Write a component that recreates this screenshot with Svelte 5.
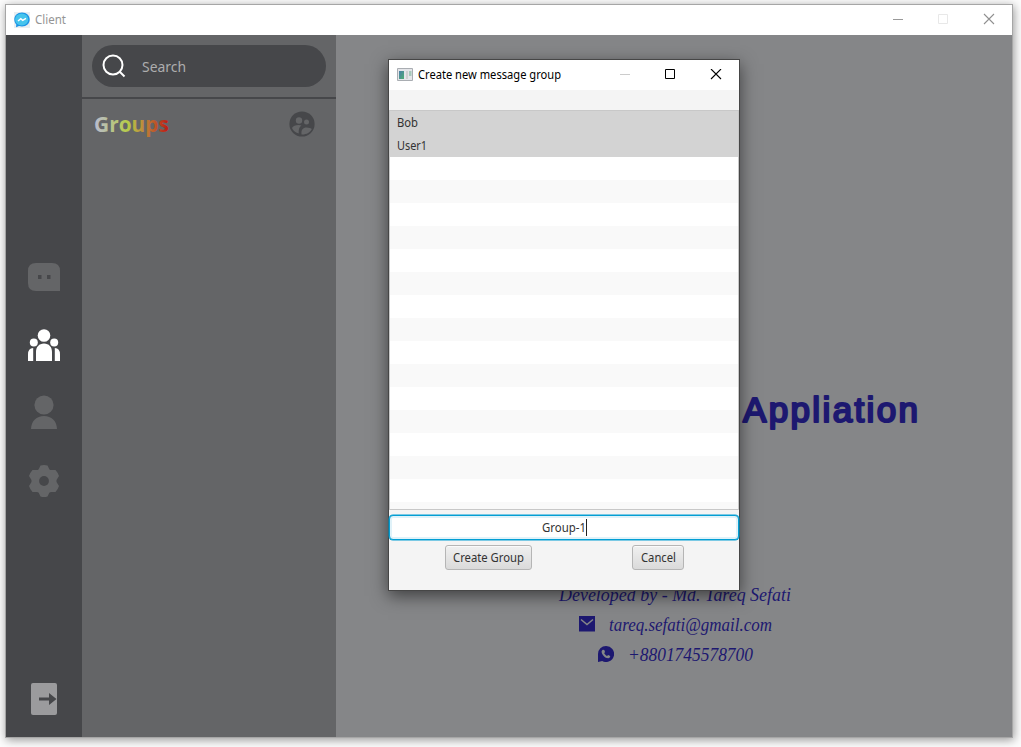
<script>
  const users = ['Bob', 'User1'];
  const emptyRows = Array.from({ length: 16 });
</script>

{#snippet label(text, width, size, cls = '', adjust = 'spacingAndGlyphs')}
  <svg class="label {cls}" width={width} height={Math.round(size * 1.5)} font-size={size}>
    <text x="0" y={Math.round(size * 1.1)} textLength={width} lengthAdjust={adjust}>{text}</text>
  </svg>
{/snippet}

<div class="desktop">
  <section class="window">
    <header class="titlebar">
      <svg class="logo" width="16" height="16" viewBox="0 0 16 16">
        <rect width="16" height="16" fill="#e9eef1" />
        <path d="M8 .5C3.400 .5 .300 3.500 .300 7.500c0 2 .8 3.700 2 4.900L2 15.300l3-1.200c1 .3 2 .4 3 .4 4.600 0 7.700-3 7.700-7S12.600.5 8 .5Z" fill="#1b94e6" />
        <ellipse cx="7.700" cy="7.500" rx="6.600" ry="5.900" fill="#45c4ec" />
        <path d="m4 9 2.800-2.300L8.700 8.300 12 6.300" fill="none" stroke="#fff" stroke-width="1.500" />
      </svg>
      {@render label('Client', 31, 12)}
      <svg class="controls" width="102" height="12" viewBox="0 0 102 12" fill="none">
        <path d="M0 6.500h10" stroke="#999" />
        <path d="M45.500 1.500h9v9h-9z" stroke="#e8e8e8" />
        <path d="m91 1 10 10m0-10L91 11" stroke="#909090" stroke-width="1.100" />
      </svg>
    </header>
    <div class="body">
      <nav class="rail">
        <svg width="32" height="28" viewBox="0 0 32 28"><path d="M8 0h16q8 0 8 8v20H8q-8 0-8-8V8q0-8 8-8Z" fill="#646567" /><path d="M10 12h3.500v4H10zm9 0h3.500v4H19z" fill="#46474a" /></svg>
        <svg class="people" width="32" height="32" viewBox="0 0 32 32" fill="#fff">
          <circle cx="16" cy="6.500" r="6.300" /><circle cx="5.800" cy="13.500" r="4" /><circle cx="26.200" cy="13.500" r="4" />
          <path d="M8 32v-9c0-5 3-8.500 8-8.500s8 3.500 8 8.500v9ZM0 32v-6.500Q0 19 5.200 19v13ZM32 32v-6.500Q32 19 26.800 19v13Z" />
        </svg>
        <svg class="person" width="26" height="34" viewBox="0 0 26 34" fill="#646567"><circle cx="13" cy="10" r="9.600" /><path d="M0 34C.3 26 5.500 21 13 21s12.700 5 13 13Z" /></svg>
        <svg class="gear" width="32" height="32" viewBox="0 0 32 32"><path d="M12.500.5q3.500-1 7 0l1.800 3.700q.7 1 2 .9l4.200-.2q2.500 2.800 3.500 6l-2.200 3.500q-.7 1.600 0 3.200l2.200 3.500q-1 3.200-3.500 6l-4.200-.2q-1.300 0-2 .9l-1.800 3.700q-3.500 1-7 0l-1.800-3.700q-.7-1-2-.9l-4.200.2q-2.500-2.800-3.500-6l2.200-3.500q.7-1.600 0-3.200L1 10.900q1-3.200 3.500-6l4.200.2q1.300 0 2-.9Z" fill="#646567" /><circle cx="16" cy="16" r="4.900" fill="#46474a" /></svg>
        <svg class="exit" width="26" height="32" viewBox="0 0 26 32"><rect width="26" height="32" rx="2" fill="#9b9b9d" /><path d="M8 14.500h10V10l7.500 6-7.500 6v-4.500H8z" fill="#46474a" /></svg>
      </nav>
      <aside class="panel">
        <div class="searcharea">
          <div class="search">
            <svg width="24" height="24" viewBox="0 0 24 24" fill="none" stroke="#fff" stroke-width="2"><circle cx="11" cy="11" r="9.500" /><path d="m17.500 17.500 5 5" /></svg>
            {@render label('Search', 44, 15)}
          </div>
        </div>
        <div class="heading">
          <svg class="groups" width="75" height="30">
            <defs><linearGradient id="rainbow"><stop stop-color="#babbd2" /><stop offset=".45" stop-color="#b6cc49" /><stop offset=".7" stop-color="#bd7d37" /><stop offset="1" stop-color="#bd1712" /></linearGradient></defs>
            <text x="0" y="21" textLength="75" lengthAdjust="spacingAndGlyphs" fill="url(#rainbow)">Groups</text>
          </svg>
          <svg width="26" height="26" viewBox="0 0 26 26"><circle cx="13" cy="13" r="12.600" fill="#46474a" /><g fill="#646567"><circle cx="10" cy="9.500" r="3.200" /><circle cx="17.500" cy="11" r="2.500" /><path d="M3 17c1-3 7-3.600 9.500-2.500-2.300 1.500-3 4-2.800 8C6 21.500 4 19.500 3 17ZM12.500 23.500c-.4-5 1.500-7 5-7 2.500 0 4.700.8 5.300 1.500-1.700 3.500-5.200 5.700-10.300 5.500Z" /></g></svg>
        </div>
      </aside>
      <main class="welcome">
        <div class="title">{@render label('Appliation', 175, 35, 'rounded', 'spacing')}</div>
        <div class="credits">
          <div>{@render label('Developed by - Md. Tareq Sefati', 232, 19, 'script')}</div>
          <div class="contact">
            <svg width="16" height="16" viewBox="0 0 16 16"><path fill="#1d1870" d="M0 0h16v15.500H0z" /><path d="m2 3.500 6 5 6-5" fill="none" stroke="#858688" stroke-width="1.500" /></svg>
            {@render label('tareq.sefati@gmail.com', 163, 19, 'script')}
          </div>
          <div class="contact">
            <svg width="16" height="16" viewBox="0 0 16 16"><path d="M8 0a8 8 0 1 1-3.800 15L0 16l0-8A8 8 0 0 1 8 0Z" fill="#1d1870" /><path d="M5 3.800 6.300 4 7 6l-.8 1.200c.7 1.200 1.500 2 2.800 2.700L10.200 9l2 1c.1 1.200-.7 2.200-2 2.300C7 12 3.800 8.800 3.600 5.700 3.700 4.700 4.200 4 5 3.800Z" fill="#858688" /></svg>
            {@render label('+8801745578700', 125, 19, 'script')}
          </div>
        </div>
      </main>
    </div>
  </section>

  <section class="dialog">
    <header class="dialogbar">
      <svg width="16" height="14" viewBox="0 0 16 14">
        <defs><linearGradient id="screen" x2="1" y2="1"><stop stop-color="#4b7eaa" /><stop offset="1" stop-color="#4eae72" /></linearGradient></defs>
        <path d="M.5.5h15v12H.5z" fill="#e4e5e9" stroke="#a9adb2" /><path d="M2 3h5v8H2z" fill="url(#screen)" /><path d="M9 3h2v8H9z" fill="#d0d0d0" /><path d="M12 3h2.500v5H12z" fill="#a7c9bb" />
      </svg>
      {@render label('Create new message group', 143, 12)}
      <svg class="dialogcontrols" width="102" height="12" viewBox="0 0 102 12" fill="none">
        <path d="M0 5.500h10" stroke="#ccc" />
        <path d="M45.500 .5h9v9h-9z" stroke="#000" />
        <path d="m91 0 10 10m0-10L91 10" stroke="#000" stroke-width="1.100" />
      </svg>
    </header>
    <div class="list">
      {#each users as user, i}
        <div class="row selected">{@render label(user, i ? 30 : 21, 12)}</div>
      {/each}
      {#each emptyRows as _}
        <div class="row"></div>
      {/each}
    </div>
    <div class="field">{@render label('Group-1', 44, 12)}<i class="caret"></i></div>
    <div class="actions">
      <button class="create">{@render label('Create Group', 71, 12)}</button>
      <button class="cancel">{@render label('Cancel', 35, 12)}</button>
    </div>
  </section>
</div>

<style>
  :global(body) { background: #fcfcfc; overflow: hidden; }
  .desktop, .desktop * { box-sizing: border-box; }
  svg { display: block; flex: none; }
  .desktop { position: relative; width: 1021px; height: 747px; padding: 4px 0 0 5px; font-family: "Noto Sans", "Open Sans", sans-serif; }
  .label { overflow: visible; fill: currentColor; }
  .window { width: 1008px; height: 734px; border: 1px solid #a6a6a6; box-shadow: 1px 2px 9px #0006; display: flex; flex-direction: column; }
  .titlebar { height: 30px; background: #fff; display: flex; align-items: center; padding: 0 17px 0 8px; color: #959595; gap: 5px; }
  .titlebar .controls { margin-top: -2px; }
  .controls, .dialogcontrols { margin-left: auto; }
  .body { flex: 1; display: flex; min-height: 0; }
  .rail { flex: none; width: 76px; background: #46474a; display: flex; flex-direction: column; align-items: center; padding: 228px 0 22px; }
  .people { margin-top: 38px; }
  .person { margin-top: 34px; }
  .gear { margin-top: 36px; }
  .exit { margin-top: auto; }
  .panel { flex: none; width: 254px; background: #646567; }
  .searcharea { height: 64px; padding: 10px 10px 0; border-bottom: 2px solid #46474a; }
  .search { height: 42px; border-radius: 21px; background: #46474a; color: #adadae; display: flex; align-items: center; padding-left: 10px; gap: 16px; }
  .heading { display: flex; justify-content: space-between; align-items: flex-start; padding: 12px 21px 0 12px; }
  .groups { font-size: 20.5px; font-weight: 700; font-family: "Open Sans", sans-serif; }
  .welcome { flex: 1; min-width: 0; background: #858688; color: #1d1870; padding-top: 348px; }
  .title { padding-left: 407px; height: 60px; }
  .rounded { font-family: "Liberation Sans", sans-serif; stroke: currentColor; stroke-width: 2.2px; stroke-linejoin: round; }
  .script { font-family: "Liberation Serif", serif; font-style: italic; }
  .credits { width: 678px; display: flex; flex-direction: column; align-items: center; padding-top: 137px; }
  .credits > div { height: 30px; }
  .contact { display: flex; align-items: flex-start; gap: 14px; }
  .contact > svg:first-child { margin-top: 6px; }
  .dialog { position: absolute; left: 388px; top: 59px; width: 352px; height: 532px; border: 1px solid #464646; background: #f4f4f4; box-shadow: 0 5px 16px #0008; display: flex; flex-direction: column; color: #323232; }
  .dialogbar { height: 30px; flex: none; background: #fff; color: #000; display: flex; align-items: center; padding: 0 17px 0 8px; gap: 5px; }
  .list { margin-top: 20px; height: 400px; flex: none; overflow: hidden; border: 1px solid #c8c8c8; background: #fff; }
  .row { height: 23px; display: flex; align-items: center; padding-left: 7px; }
  .row:nth-child(even) { background: #f9f9f9; }
  .row.selected { background: #d3d3d3; }
  .field { margin-top: 5px; height: 25px; flex: none; border: 1px solid #039ed3; border-radius: 4px; background: #fff; box-shadow: 0 0 0 .5px #039ed3, inset 0 0 0 2px #e0f2f9; display: flex; justify-content: center; align-items: center; }
  .caret { width: 1px; height: 17px; background: #222; }
  .actions { display: flex; padding: 5px 55px 0 56px; justify-content: space-between; }
  button { height: 25px; padding: 0; border: 1px solid #b5b5b5; border-radius: 3px; background: linear-gradient(#f0f0f0, #dadada); box-shadow: inset 0 1px #fafafa; color: #323232; display: flex; align-items: center; justify-content: center; font-family: inherit; }
  .create { width: 87px; }
  .cancel { width: 52px; }
</style>
